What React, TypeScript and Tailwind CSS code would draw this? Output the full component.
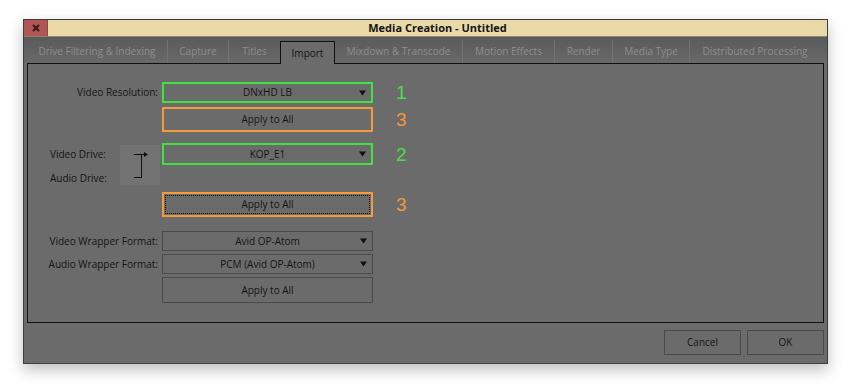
import React from 'react';

const tabs: [string, number][] = [
  ['Drive Filtering & Indexing', 141],
  ['Capture', 61],
  ['Titles', 51],
  ['Import', 55],
  ['Mixdown & Transcode', 128],
  ['Motion Effects', 92],
  ['Render', 58],
  ['Media Type', 77],
  ['Distributed Processing', 130],
];

const Caret = () => (
  <svg width="7" height="6" viewBox="0 0 7 6" className="absolute right-[5px] top-1/2 -translate-y-1/2">
    <path d="M0 0.5 H7 L3.5 5.5 Z" fill="#111" />
  </svg>
);

type BoxProps = {
  text: string;
  ring?: 'green' | 'orange' | 'none';
  select?: boolean;
  focus?: boolean;
  h: string;
};

const Box: React.FC<BoxProps> = ({ text, ring = 'none', select, focus, h }) => {
  const ringCls =
    ring === 'green'
      ? 'border-2 border-[#3fe23f]'
      : ring === 'orange'
      ? 'border-2 border-[#f39a3c]'
      : 'border border-[#4a4a4a]';
  return (
    <div className={`relative w-[211px] ${h} ${ringCls} flex items-center justify-center`}>
      <div
        className={`absolute inset-[1px] flex items-center justify-center ${
          focus ? 'border border-dotted border-[#111]' : ''
        }`}
      >
        <span className="text-[10px] text-[#151515]">{text}</span>
      </div>
      {select && <Caret />}
    </div>
  );
};

const Num: React.FC<{ n: string; c: string }> = ({ n, c }) => (
  <span className={`ml-[23px] text-[19px] leading-none ${c}`} style={{ fontFamily: '"Liberation Sans", Arial, sans-serif' }}>
    {n}
  </span>
);

export default function App() {
  return (
    <div className="w-[851px] h-[392px] bg-white pt-[19px] pl-[23px]" style={{ fontFamily: '"Open Sans", "Noto Sans", sans-serif' }}>
      <div className="w-[805px] h-[345px] bg-[#6b6b6b] border border-[#3e3e3e] shadow-[0_6px_14px_rgba(0,0,0,0.25)] flex flex-col">
        {/* title bar */}
        <div className="h-[17px] bg-[#e9d9a9] flex items-stretch border-b border-[#8d8467]">
          <div className="w-[24px] bg-[#b05656] flex items-center justify-center border-r border-[#8c4848]">
            <svg width="8" height="8" viewBox="0 0 8 8">
              <path d="M1 1 L7 7 M7 1 L1 7" stroke="#3a1515" strokeWidth="2" />
            </svg>
          </div>
          <div className="flex-1 flex items-center justify-center text-[11px] font-bold text-[#151515]">
            Media Creation - Untitled
          </div>
        </div>

        {/* tabs */}
        <div className="h-[26px] bg-gradient-to-b from-[#5a5a5a] to-[#696969] flex items-end px-[3px]">
          {tabs.map(([t, w], i) => {
            const active = t === 'Import';
            const sep = i < tabs.length - 1 && tabs[i + 1][0] !== 'Import' && !active;
            return (
              <div
                key={t}
                style={{ width: w }}
                className={`h-[23px] shrink-0 flex items-center justify-center whitespace-nowrap text-[10px] ${
                  active
                    ? 'bg-[#6b6b6b] border border-b-0 border-[#111] text-[#151515] relative top-[1px]'
                    : `text-[#8e8e8e] ${sep ? 'border-r border-[#727272]' : ''}`
                }`}
              >
                {t}
              </div>
            );
          })}
        </div>

        {/* panel */}
        <div className="mx-[3px] h-[260px] border border-[#111] pt-[18px]">
          <div className="flex items-center">
            <div className="w-[134px] text-right pr-[4px] text-[10px] text-[#151515]">Video Resolution:</div>
            <Box text="DNxHD LB" ring="green" select h="h-[21px]" />
            <Num n="1" c="text-[#4ddc4d]" />
          </div>
          <div className="flex items-center mt-[4px]">
            <div className="w-[134px]" />
            <Box text="Apply to All" ring="orange" h="h-[25px]" />
            <Num n="3" c="text-[#f0983a]" />
          </div>

          <div className="flex mt-[11px]">
            <div className="w-[134px] flex pl-[22px]">
              <div className="w-[70px] flex flex-col text-[10px] text-[#151515]">
                <div className="h-[21px] flex items-center mt-[1px]">Video Drive:</div>
                <div className="h-[24px] flex items-center mt-[1px]">Audio Drive:</div>
              </div>
              <div className="w-[40px] h-[40px] mt-[2px] bg-[#727272] flex items-center justify-center">
                <svg width="20" height="32" viewBox="0 0 20 32">
                  <path d="M4 5.5 H14" stroke="#111" strokeWidth="1" fill="none" />
                  <path d="M14 3 L18 5.5 L14 8 Z" fill="#111" />
                  <path d="M11.5 5.5 V28.5 H4" stroke="#111" strokeWidth="1" fill="none" />
                </svg>
              </div>
            </div>
            <div className="flex items-start">
              <Box text="KOP_E1" ring="green" select h="h-[22px]" />
              <Num n="2" c="text-[#4ddc4d] mt-[2px]" />
            </div>
          </div>

          <div className="flex items-center mt-[2px]">
            <div className="w-[134px]" />
            <Box text="Apply to All" ring="orange" focus h="h-[25px]" />
            <Num n="3" c="text-[#f0983a]" />
          </div>

          <div className="flex items-center mt-[14px]">
            <div className="w-[134px] text-right pr-[4px] text-[10px] text-[#151515]">Video Wrapper Format:</div>
            <Box text="Avid OP-Atom" select h="h-[20px]" />
          </div>
          <div className="flex items-center mt-[3px]">
            <div className="w-[134px] text-right pr-[4px] text-[10px] text-[#151515]">Audio Wrapper Format:</div>
            <Box text="PCM (Avid OP-Atom)" select h="h-[20px]" />
          </div>
          <div className="flex items-center mt-[3px]">
            <div className="w-[134px]" />
            <Box text="Apply to All" h="h-[26px]" />
          </div>
        </div>

        {/* footer */}
        <div className="flex justify-end gap-[6px] pr-[3px] pt-[7px]">
          <button className="w-[77px] h-[25px] border border-[#4a4a4a] text-[10px] text-[#151515]">Cancel</button>
          <button className="w-[77px] h-[25px] border border-[#4a4a4a] text-[10px] text-[#151515]">OK</button>
        </div>
      </div>
    </div>
  );
}
